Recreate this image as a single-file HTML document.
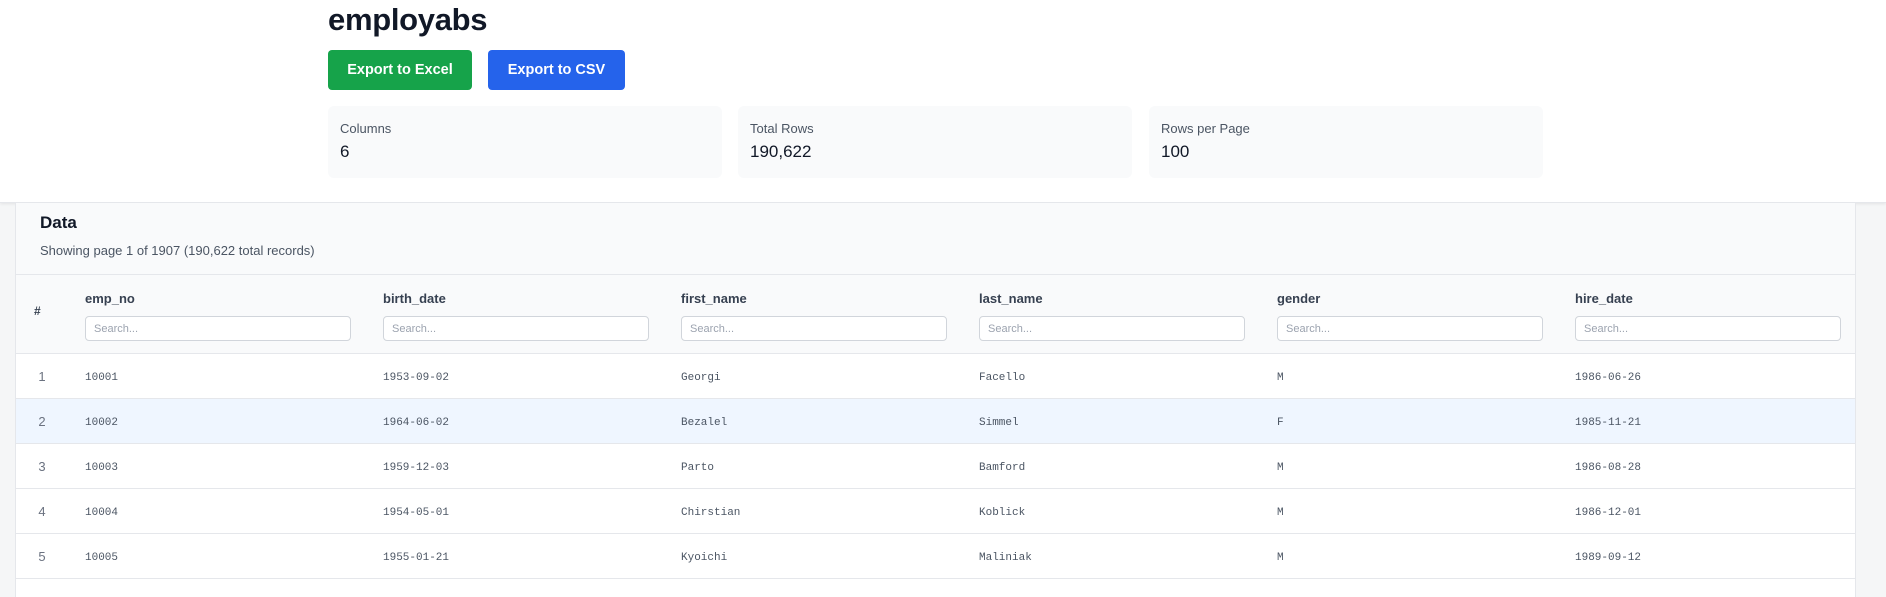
<!DOCTYPE html>
<html><head><meta charset="utf-8"><style>
*{box-sizing:border-box;margin:0;padding:0}
body{width:1886px;height:597px;overflow:hidden;background:#f5f6f7;font-family:"Liberation Sans",Arial,sans-serif;color:#111827;position:relative}
.top{position:absolute;left:0;top:0;width:1886px;height:203px;background:#fff;border-bottom:1px solid #e5e7eb;box-shadow:0 1px 3px rgba(0,0,0,.08)}
h1{position:absolute;left:328px;top:2px;font-size:31px;font-weight:bold;color:#111827;letter-spacing:-0.3px}
.btn{position:absolute;top:50px;height:40px;border-radius:4px;color:#fff;font-weight:bold;font-size:14.5px;line-height:41px;text-align:center}
.card{position:absolute;top:106px;width:394px;height:72px;background:#f9fafb;border-radius:6px;padding:15px 12px}
.card .l{font-size:13px;color:#4b5563}
.card .v{font-size:17px;color:#111827;margin-top:6px}
.panel{position:absolute;left:15px;top:203px;width:1841px;height:394px;background:#fff;border-left:1px solid #e5e7eb;border-right:1px solid #e5e7eb}
.ph{position:absolute;left:0;top:0;width:100%;height:72px;background:#f9fafb;border-bottom:1px solid #e5e7eb}
.ph b{position:absolute;left:24px;top:10px;font-size:17px}
.ph span{position:absolute;left:24px;top:40px;font-size:13px;color:#4b5563}
.th{position:absolute;left:0;top:72px;width:100%;height:79px;background:#f9fafb;border-bottom:1px solid #e5e7eb}
.hash{position:absolute;left:18px;top:29px;font-size:12px;font-weight:bold;color:#374151}
.col{position:absolute;top:16px;font-size:13px;font-weight:bold;color:#374151}
.inp{position:absolute;top:41px;width:266px;height:25px;border:1px solid #d1d5db;border-radius:4px;background:#fff;font-size:11px;color:#9ca3af;padding:6px 8px}
.row{position:absolute;left:0;width:100%;height:45px;border-bottom:1px solid #e5e7eb}
.row .n{position:absolute;left:0;width:52px;text-align:center;top:15px;font-size:13px;color:#6b7280}
.row .c{position:absolute;top:18px;font-family:"Liberation Mono","DejaVu Sans Mono",monospace;font-size:11px;color:#4b5563}
</style></head><body>
<div class="top">
<h1>employabs</h1>
<div class="btn" style="left:328px;width:144px;background:#16a34a">Export to Excel</div>
<div class="btn" style="left:488px;width:137px;background:#2563eb">Export to CSV</div>
<div class="card" style="left:328px"><div class="l">Columns</div><div class="v">6</div></div>
<div class="card" style="left:738px"><div class="l">Total Rows</div><div class="v">190,622</div></div>
<div class="card" style="left:1149px"><div class="l">Rows per Page</div><div class="v">100</div></div>
</div>
<div class="panel">
<div class="ph"><b>Data</b><span>Showing page 1 of 1907 (190,622 total records)</span></div>
<div class="th">
<div class="hash">#</div>
<div class="col" style="left:69px">emp_no</div><div class="inp" style="left:69px">Search...</div>
<div class="col" style="left:367px">birth_date</div><div class="inp" style="left:367px">Search...</div>
<div class="col" style="left:665px">first_name</div><div class="inp" style="left:665px">Search...</div>
<div class="col" style="left:963px">last_name</div><div class="inp" style="left:963px">Search...</div>
<div class="col" style="left:1261px">gender</div><div class="inp" style="left:1261px">Search...</div>
<div class="col" style="left:1559px">hire_date</div><div class="inp" style="left:1559px">Search...</div>
</div>
<div class="row" style="top:151px"><div class="n">1</div><div class="c" style="left:69px">10001</div><div class="c" style="left:367px">1953-09-02</div><div class="c" style="left:665px">Georgi</div><div class="c" style="left:963px">Facello</div><div class="c" style="left:1261px">M</div><div class="c" style="left:1559px">1986-06-26</div></div>
<div class="row" style="top:196px;background:#eff6ff"><div class="n">2</div><div class="c" style="left:69px">10002</div><div class="c" style="left:367px">1964-06-02</div><div class="c" style="left:665px">Bezalel</div><div class="c" style="left:963px">Simmel</div><div class="c" style="left:1261px">F</div><div class="c" style="left:1559px">1985-11-21</div></div>
<div class="row" style="top:241px"><div class="n">3</div><div class="c" style="left:69px">10003</div><div class="c" style="left:367px">1959-12-03</div><div class="c" style="left:665px">Parto</div><div class="c" style="left:963px">Bamford</div><div class="c" style="left:1261px">M</div><div class="c" style="left:1559px">1986-08-28</div></div>
<div class="row" style="top:286px"><div class="n">4</div><div class="c" style="left:69px">10004</div><div class="c" style="left:367px">1954-05-01</div><div class="c" style="left:665px">Chirstian</div><div class="c" style="left:963px">Koblick</div><div class="c" style="left:1261px">M</div><div class="c" style="left:1559px">1986-12-01</div></div>
<div class="row" style="top:331px"><div class="n">5</div><div class="c" style="left:69px">10005</div><div class="c" style="left:367px">1955-01-21</div><div class="c" style="left:665px">Kyoichi</div><div class="c" style="left:963px">Maliniak</div><div class="c" style="left:1261px">M</div><div class="c" style="left:1559px">1989-09-12</div></div>
</div>
</body></html>
